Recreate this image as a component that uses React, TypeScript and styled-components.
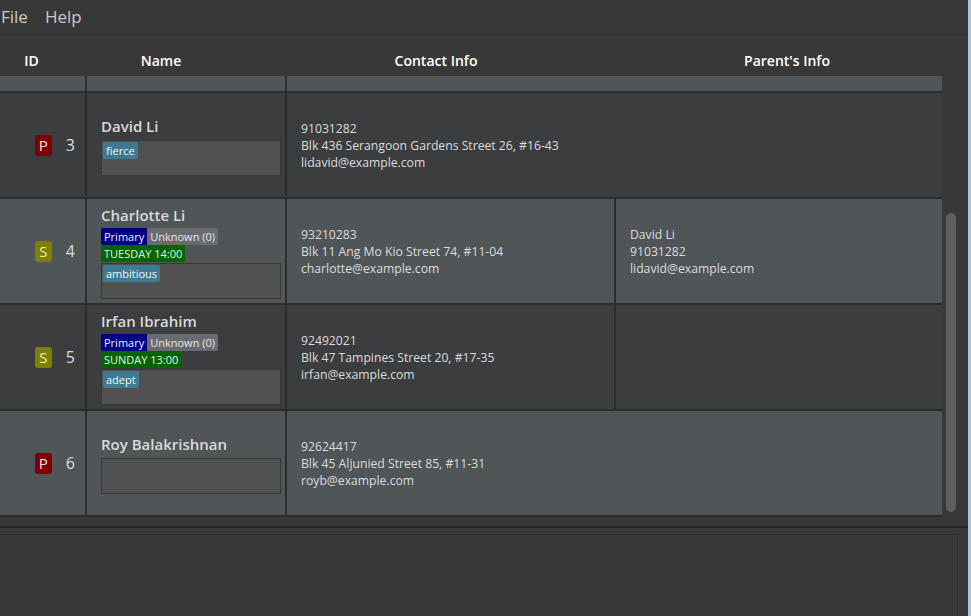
import React from 'react';
import styled, { createGlobalStyle } from 'styled-components';

const Global = createGlobalStyle`
  html, body { margin: 0; padding: 0; background: #383838; }
  body { font-family: "Open Sans", "Noto Sans", sans-serif; overflow: hidden; }
  * { box-sizing: border-box; }
`;

const Window = styled.div`
  width: 971px;
  height: 616px;
  display: flex;
  background: #383838;
`;

const Main = styled.div`
  flex: 1;
  display: flex;
  flex-direction: column;
  min-width: 0;
`;

const Edge = styled.div`
  width: 3px;
  background: #a9c4da;
`;

const MenuBar = styled.div`
  height: 35px;
  display: flex;
  align-items: center;
  gap: 17px;
  padding: 0 0 2px 1px;
  border-bottom: 1px solid #2b2b2b;
  font-size: 17px;
  color: #c9c9c9;
`;

const MenuItem = styled.span`
  line-height: 1;
`;

const ListPanel = styled.div`
  display: flex;
  flex-direction: column;
  border-bottom: 2px solid #2a2a2a;
  padding-bottom: 9px;
`;

const Header = styled.div`
  height: 41px;
  padding-top: 9px;
  display: grid;
  grid-template-columns: 63px 196px 354px 348px;
  align-items: center;
`;

const HeaderLabel = styled.div`
  text-align: center;
  font-size: 14px;
  font-weight: 600;
  color: #ffffff;
`;

const Body = styled.div`
  display: flex;
  height: 441px;
`;

const RowList = styled.div`
  width: 942px;
  overflow: hidden;
  display: flex;
  flex-direction: column;
`;

const Row = styled.div<{ $light: boolean; $height: number; $parent: boolean }>`
  flex: none;
  height: ${(p) => p.$height}px;
  display: grid;
  grid-template-columns: ${(p) => (p.$parent ? '87px 200px 329px 1fr' : '87px 200px 1fr')};
  background: ${(p) => (p.$light ? '#505558' : '#3c3d3f')};
  border-bottom: 2px solid #2c2c2c;
`;

const IdCell = styled.div`
  display: flex;
  align-items: center;
  justify-content: flex-end;
  gap: 14px;
  padding-right: 10px;
  border-right: 2px solid #2c2c2c;
`;

const Badge = styled.div<{ $bg: string; $fg: string }>`
  width: 17px;
  height: 21px;
  border-radius: 3px;
  background: ${(p) => p.$bg};
  color: ${(p) => p.$fg};
  font-size: 15px;
  display: flex;
  align-items: center;
  justify-content: center;
`;

const IdNumber = styled.span`
  font-size: 16px;
  color: #dedede;
`;

const NameCell = styled.div`
  display: flex;
  flex-direction: column;
  justify-content: center;
  padding: 2px 5px 0 14px;
  border-right: 2px solid #2c2c2c;
`;

const Name = styled.div`
  font-size: 15px;
  font-weight: 600;
  line-height: 20px;
  color: #d9d9d9;
  margin-bottom: 3px;
  white-space: nowrap;
`;

const ChipRow = styled.div`
  display: flex;
`;

const Chip = styled.span<{ $bg: string; $fg: string; $radius?: string }>`
  font-size: 11px;
  line-height: 17px;
  padding: 0 3px;
  background: ${(p) => p.$bg};
  color: ${(p) => p.$fg};
  border-radius: ${(p) => p.$radius || '2px'};
  white-space: nowrap;
`;

const TagBox = styled.div`
  width: 180px;
  height: 36px;
  margin-top: 1px;
  padding: 1px;
  background: #515151;
  border: 1px solid #393939;
  display: flex;
  align-items: flex-start;
  gap: 3px;
`;

const InfoCell = styled.div<{ $divider?: boolean }>`
  display: flex;
  flex-direction: column;
  justify-content: center;
  padding-left: 14px;
  font-size: 12.2px;
  line-height: 17px;
  color: #dcdcdc;
  border-right: ${(p) => (p.$divider ? '2px solid #2c2c2c' : 'none')};
`;

const Track = styled.div`
  width: 16px;
  padding-left: 4px;
  display: flex;
  flex-direction: column;
`;

const Thumb = styled.div<{ $top: number; $height: number }>`
  margin-top: ${(p) => p.$top}px;
  height: ${(p) => p.$height}px;
  width: 10px;
  border-radius: 5px;
  background: #5f5f5f;
`;

const ResultArea = styled.div`
  flex: 1;
  padding-top: 6px;
  display: flex;
`;

const ResultBox = styled.div`
  width: 958px;
  border-top: 1px solid #2d2d2d;
  border-right: 1px solid #2d2d2d;
`;

type Person = {
  id: number;
  role: 'P' | 'S';
  name: string;
  level?: boolean;
  day?: string;
  tags: string[];
  phone: string;
  address: string;
  email: string;
  parent?: string[] | null;
};

const people: Person[] = [
  {
    id: 3,
    role: 'P',
    name: 'David Li',
    tags: ['fierce'],
    phone: '91031282',
    address: 'Blk 436 Serangoon Gardens Street 26, #16-43',
    email: 'lidavid@example.com',
  },
  {
    id: 4,
    role: 'S',
    name: 'Charlotte Li',
    level: true,
    day: 'TUESDAY 14:00',
    tags: ['ambitious'],
    phone: '93210283',
    address: 'Blk 11 Ang Mo Kio Street 74, #11-04',
    email: 'charlotte@example.com',
    parent: ['David Li', '91031282', 'lidavid@example.com'],
  },
  {
    id: 5,
    role: 'S',
    name: 'Irfan Ibrahim',
    level: true,
    day: 'SUNDAY 13:00',
    tags: ['adept'],
    phone: '92492021',
    address: 'Blk 47 Tampines Street 20, #17-35',
    email: 'irfan@example.com',
    parent: [],
  },
  {
    id: 6,
    role: 'P',
    name: 'Roy Balakrishnan',
    tags: [],
    phone: '92624417',
    address: 'Blk 45 Aljunied Street 85, #11-31',
    email: 'royb@example.com',
  },
];

const badgeColors = {
  P: { bg: '#800000', fg: '#f2e6e6' },
  S: { bg: '#808000', fg: '#ecebc4' },
};

export default function App() {
  return (
    <>
      <Global />
      <Window>
        <Main>
          <MenuBar>
            <MenuItem>File</MenuItem>
            <MenuItem>Help</MenuItem>
          </MenuBar>
          <ListPanel>
            <Header>
              <HeaderLabel>ID</HeaderLabel>
              <HeaderLabel>Name</HeaderLabel>
              <HeaderLabel>Contact Info</HeaderLabel>
              <HeaderLabel>Parent's Info</HeaderLabel>
            </Header>
            <Body>
              <RowList>
                <Row $light $height={17} $parent={false}>
                  <IdCell />
                  <NameCell />
                  <InfoCell />
                </Row>
                {people.map((p, i) => {
                  const hasParent = p.parent != null;
                  const c = badgeColors[p.role];
                  return (
                    <Row key={p.id} $light={i % 2 === 1} $height={106} $parent={hasParent}>
                      <IdCell>
                        <Badge $bg={c.bg} $fg={c.fg}>{p.role}</Badge>
                        <IdNumber>{p.id}</IdNumber>
                      </IdCell>
                      <NameCell>
                        <Name>{p.name}</Name>
                        {p.level && (
                          <ChipRow>
                            <Chip $bg="#000080" $fg="#ececff" $radius="2px 0 0 2px">Primary</Chip>
                            <Chip $bg="#686c71" $fg="#e6e6e6" $radius="0 2px 2px 0">Unknown (0)</Chip>
                          </ChipRow>
                        )}
                        {p.day && (
                          <ChipRow>
                            <Chip $bg="#066406" $fg="#dff5df">{p.day}</Chip>
                          </ChipRow>
                        )}
                        <TagBox>
                          {p.tags.map((t) => (
                            <Chip key={t} $bg="#3e7b91" $fg="#f0f6f8">{t}</Chip>
                          ))}
                        </TagBox>
                      </NameCell>
                      <InfoCell $divider={hasParent}>
                        <div>{p.phone}</div>
                        <div>{p.address}</div>
                        <div>{p.email}</div>
                      </InfoCell>
                      {hasParent && (
                        <InfoCell>
                          {p.parent!.map((l) => (
                            <div key={l}>{l}</div>
                          ))}
                        </InfoCell>
                      )}
                    </Row>
                  );
                })}
              </RowList>
              <Track>
                <Thumb $top={137} $height={299} />
              </Track>
            </Body>
          </ListPanel>
          <ResultArea>
            <ResultBox />
          </ResultArea>
        </Main>
        <Edge />
      </Window>
    </>
  );
}
